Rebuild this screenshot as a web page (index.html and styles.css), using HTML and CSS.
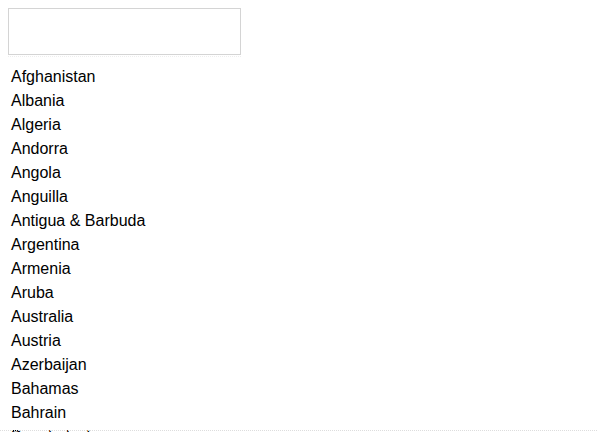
FILE: index.html
```html
<!DOCTYPE html>
<html>
<head>
<meta charset="utf-8">
<link rel="stylesheet" href="styles.css">
</head>
<body>
<div class="search">
  <input class="search-input" type="text">
</div>
<ul class="countries">
  <li>Afghanistan</li>
  <li>Albania</li>
  <li>Algeria</li>
  <li>Andorra</li>
  <li>Angola</li>
  <li>Anguilla</li>
  <li>Antigua &amp; Barbuda</li>
  <li>Argentina</li>
  <li>Armenia</li>
  <li>Aruba</li>
  <li>Australia</li>
  <li>Austria</li>
  <li>Azerbaijan</li>
  <li>Bahamas</li>
  <li>Bahrain</li>
  <li>Bangladesh</li>
  <li>Barbados</li>
  <li>Belarus</li>
</ul>
<div class="edge"></div>
</body>
</html>
```
FILE: styles.css
```css
html, body {
  margin: 0;
  padding: 0;
  background: #fff;
  overflow: hidden;
  height: 432px;
}
body {
  padding: 8px;
  font-family: "Liberation Sans", Arial, sans-serif;
  font-size: 16px;
  color: #000;
  box-sizing: border-box;
}
.search {
  width: 233px;
  height: 47px;
  border-bottom: 1px dotted #eeeeee;
  padding-bottom: 1px;
}
.search-input {
  display: block;
  box-sizing: border-box;
  width: 233px;
  height: 47px;
  margin: 0;
  border: 1px solid #d4d4d4;
  background: #fff;
  outline: none;
}
.countries {
  list-style: none;
  margin: 8px 0 0 0;
  padding: 0 0 0 3px;
}
.countries li {
  line-height: 24px;
  height: 24px;
}
.edge {
  position: fixed;
  left: 0;
  right: 0;
  bottom: 1px;
  height: 0;
  border-top: 1px dotted #dddddd;
}
```
